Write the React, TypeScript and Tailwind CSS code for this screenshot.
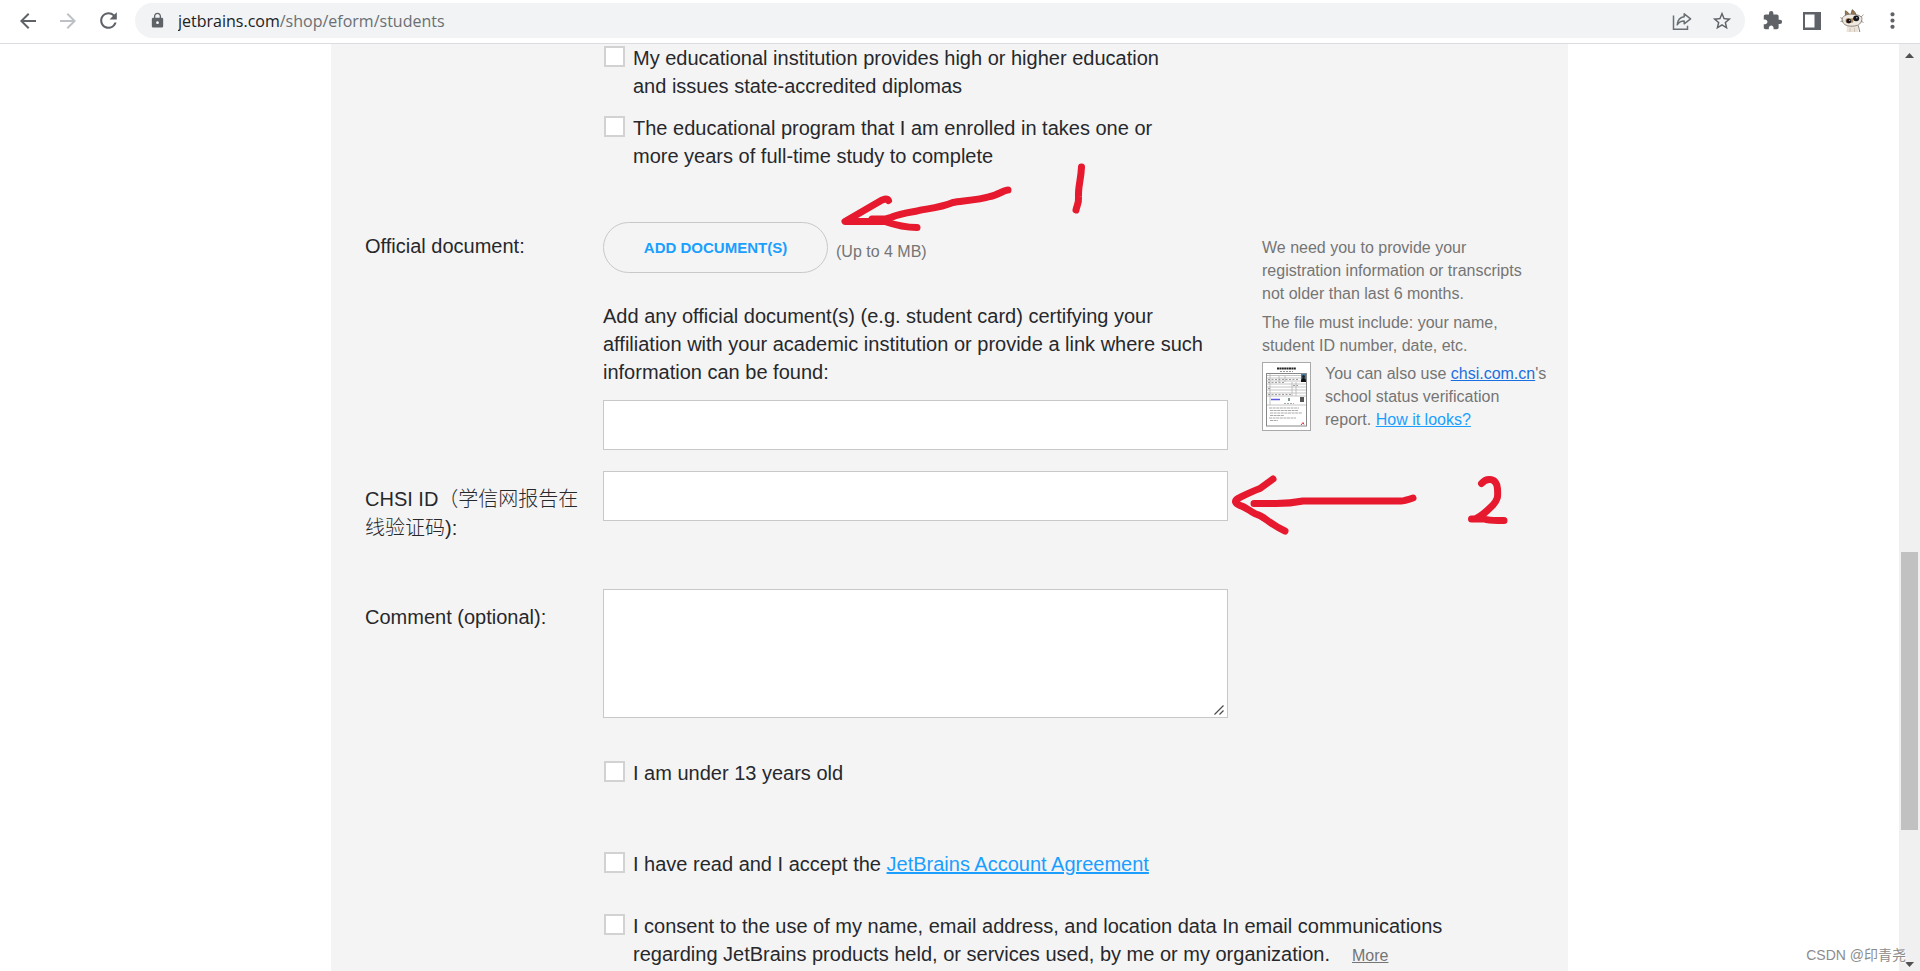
import type { ReactNode } from "react";
import {
  MdArrowBack,
  MdArrowForward,
  MdExtension,
  MdLock,
  MdMoreVert,
  MdRefresh,
  MdStarBorder,
} from "react-icons/md";

function BarButton({ label, children }: { label: string; children: ReactNode }) {
  return (
    <button
      type="button"
      aria-label={label}
      className="flex h-[35px] w-10 shrink-0 items-center justify-center text-[#5f6368]"
    >
      {children}
    </button>
  );
}

function ShareIcon() {
  return (
    <svg width="20" height="20" viewBox="0 0 20 20" fill="none" stroke="#6b6f74" strokeWidth="1.5">
      <path d="M1.500 4.500v13.700h14v-3.500" />
      <path
        d="M12.200 2.800 18.600 7.800 12.200 12.800V10C9.300 10 7 11 5.200 13.800 5.600 9.200 8 6.100 12.200 5.700Z"
        strokeLinejoin="round"
      />
    </svg>
  );
}

function SidePanelIcon() {
  return (
    <svg width="18" height="18" viewBox="0 0 18 18">
      <path fill="#5f6368" fillRule="evenodd" d="M0 0h18v18H0zM2 2.500h9.500v13H2z" />
    </svg>
  );
}

function CatAvatar() {
  return (
    <svg width="24" height="24" viewBox="0 0 24 24">
      <path d="M7 14.500h10.500l1 8.500H6.500z" fill="#ece4da" />
      <path d="M18.300 16.500 19.800 23" stroke="#8b847c" fill="none" />
      <path d="M5.500 7.500 5.300 1.800C7.200 2.500 8.600 3.900 9.300 5.500zM11 5.200 12.200.700C14 1.600 15.300 3.300 16 5.600z" fill="#9b7a52" stroke="#5a4a3a" strokeWidth=".7" />
      <path
        d="M2 9.500C4 6 7.500 5 11.500 5.200s8 .6 10.300 3.300c.6 3-1 6.500-4.300 7.800-4 1.400-9.500 1.300-12.500-.600C2.800 14 1.800 12 2 9.500z"
        fill="#efe9e1"
        stroke="#77706a"
        strokeWidth=".8"
      />
      <path d="M11 9.500 14 9l-1 4.500-2.300.200z" fill="#a98862" />
      <ellipse cx="8.600" cy="11.800" rx="3.100" ry="2.700" fill="#a98862" />
      <ellipse cx="8.800" cy="12" rx="2.500" ry="2.300" fill="#17151a" />
      <ellipse cx="16.200" cy="9.300" rx="3" ry="2.900" fill="#17151a" />
      <circle cx="9.700" cy="11.400" r=".7" fill="#9fb4cc" />
      <circle cx="16.800" cy="8.700" r=".8" fill="#9fb4cc" />
      <path d="M.300 8.500 3 10M.500 12.500 3.500 12M21 8l2.500-2.300M21 12l2.500 1.500" stroke="#77706a" strokeWidth=".7" />
      <path d="M10 19v4M14.500 19v4" stroke="#c9bdb0" strokeWidth=".8" />
    </svg>
  );
}

function BrowserBar() {
  return (
    <header className="flex h-11 shrink-0 items-start border-b border-[#dadce0] bg-white px-2 pt-[3px]">
      <BarButton label="Back">
        <MdArrowBack size={24} />
      </BarButton>
      <BarButton label="Forward">
        <MdArrowForward size={24} className="text-[#bdc1c6]" />
      </BarButton>
      <BarButton label="Reload">
        <MdRefresh size={25} />
      </BarButton>
      <div className="mx-[7px] flex h-[35px] min-w-0 flex-1 items-center rounded-full bg-[#f1f3f4] pr-[3px] pl-[14px]">
        <MdLock size={17} className="shrink-0 text-[#5f6368]" />
        <p className="ml-3 flex-1 truncate font-['Open_Sans','Noto_Sans',sans-serif] text-[16px] leading-6 text-[#6b6f73]">
          <span className="text-[#202124]">jetbrains.com</span>/shop/eform/students
        </p>
        <BarButton label="Share">
          <ShareIcon />
        </BarButton>
        <BarButton label="Bookmark">
          <MdStarBorder size={22} />
        </BarButton>
      </div>
      <BarButton label="Extensions">
        <MdExtension size={21} />
      </BarButton>
      <BarButton label="Side panel">
        <SidePanelIcon />
      </BarButton>
      <BarButton label="Profile">
        <CatAvatar />
      </BarButton>
      <BarButton label="Menu">
        <MdMoreVert size={25} />
      </BarButton>
    </header>
  );
}

function Check({ id, children }: { id: string; children: ReactNode }) {
  return (
    <div className="flex items-start">
      <input
        id={id}
        type="checkbox"
        className="mx-px mt-[2px] h-[21px] w-[21px] shrink-0 appearance-none border-2 border-[#d2d2d2] bg-white"
      />
      <label htmlFor={id} className="ml-[7px]">
        {children}
      </label>
    </div>
  );
}

function ReportThumb() {
  return (
    <svg width="49" height="69" viewBox="0 0 49 69" className="shrink-0">
      <rect x=".5" y=".5" width="48" height="68" fill="#fff" stroke="#a9a9a9" />
      <path d="M15 6.500h19" stroke="#222" strokeWidth="2" strokeDasharray="2 .4" />
      <path d="M18 9.500h13" stroke="#999" strokeDasharray="2 1" />
      <rect x="4.500" y="11.500" width="40" height="52.500" fill="#fff" stroke="#888" />
      <path d="M5 13.500h34M5 16h34M5 19h39M5 22h39M5 25h39M5 28h39M5 31h39M5 34h39M5 43h39M8 12v31M17 14v6M23 14v6M30 20v14M34 20v14" stroke="#b5b5b5" strokeWidth=".8" />
      <path d="M6 17.500h30M6 20.500h16M6 26.500h3M31 23.500h5M6 32.500h24" stroke="#888" strokeWidth=".8" strokeDasharray="2 1.500" />
      <rect x="39" y="12" width="5" height="8" fill="#3f7ea6" />
      <path d="M39 20c0-3 1-4 2.500-4s2.500 1 2.500 4z" fill="#111" />
      <circle cx="41.500" cy="14.500" r="1.500" fill="#222" />
      <path d="M9 37.500h9" stroke="#5a5ae0" strokeWidth="1.500" />
      <path d="M26 36h2v3h-2z" fill="#7c9c8c" />
      <path d="M22 41.500h10" stroke="#aaa" strokeDasharray="2 1" />
      <path d="M38 35h4v5h-4z" fill="#555" />
      <path d="M7 46h30M8 48.500h28M8 51h32M8 53.500h14M7 56h27M8 58.500h8" stroke="#aaa" strokeDasharray="3 .6" />
      <path d="M39 63l2-2.500 1 2" stroke="#d33" fill="none" />
    </svg>
  );
}

function Annotations() {
  return (
    <svg
      width="1237"
      height="927"
      viewBox="331 44 1237 927"
      className="pointer-events-none absolute top-0 left-0"
      fill="none"
      stroke="#e6192e"
      strokeWidth="7"
      strokeLinecap="round"
      strokeLinejoin="round"
    >
      <path d="M1008 190C1004 190 998 195 990 196.500C979 200 961 201 953 202.500C940 208 924 209 917 211C905 213 898 214 892 217L885 219H872" />
      <path d="M888.500 200.500C887 198 885 199 882 200L845 221.500H885C895 225 904 227.500 917 227.500" />
      <path d="M1081.500 167C1081 180 1078 186 1078.500 197C1079 203 1077 205 1076 210" />
      <path d="M1413 498Q1404 501 1401 501H1303C1293 503 1286 503.500 1276 503.500H1254" />
      <path d="M1273 479L1260 488.500C1250 492 1243 496 1238 498.500C1234 501 1235 503.500 1240 505.500C1246 507 1252 513 1257 514.500C1264 516 1269 524 1285 531" />
      <path d="M1481.500 483.500C1487 477 1497 478 1497.500 489C1498 497 1498 499 1493 505C1486 512 1482 516 1475 519L1471.500 519H1484C1490 521 1494 520.500 1504 520.500" />
    </svg>
  );
}

const box = "block w-full border border-[#c8c8c8] bg-white px-3 outline-none";
const row = "grid grid-cols-[238px_625px_1fr]";

function StudentForm() {
  return (
    <form className="relative mx-auto w-full max-w-[1237px] bg-[#f4f4f4] px-[34px] font-['Liberation_Sans','Noto_Sans_CJK_SC',sans-serif] text-[20px] leading-7 text-[#27282c]">
      <div className="ml-[238px] flex w-[560px] flex-col gap-[14px]">
        <Check id="accredited">
          My educational institution provides high or higher education
          <br />
          and issues state-accredited diplomas
        </Check>
        <Check id="full-time">
          The educational program that I am enrolled in takes one or
          <br />
          more years of full-time study to complete
        </Check>
      </div>

      <div className={`${row} mt-[52px]`}>
        <label htmlFor="add-docs" className="pt-[10px]">
          Official document:
        </label>
        <div>
          <div className="flex items-center">
            <button
              id="add-docs"
              type="button"
              className="h-[51px] w-[225px] rounded-full border border-[#c8c8c8] text-[15px] font-bold text-[#1a9fff]"
            >
              ADD DOCUMENT(S)
            </button>
            <span className="ml-2 pt-2 text-[16px] text-[#757575]">(Up to 4 MB)</span>
          </div>
          <label htmlFor="doc-link" className="mt-[29px] block">
            Add any official document(s) (e.g. student card) certifying your
            <br />
            affiliation with your academic institution or provide a link where such
            <br />
            information can be found:
          </label>
          <input id="doc-link" type="text" className={`${box} mt-[14px] h-[50px]`} />
        </div>
        <aside className="pt-[14px] pl-[34px] text-[16px] leading-[23px] text-[#757575]">
          <p>
            We need you to provide your
            <br />
            registration information or transcripts
            <br />
            not older than last 6 months.
          </p>
          <p className="mt-[6px]">
            The file must include: your name,
            <br />
            student ID number, date, etc.
          </p>
          <div className="mt-[5px] flex gap-[14px]">
            <ReportThumb />
            <p className="whitespace-nowrap">
              You can also use{" "}
              <a href="#chsi" className="text-[#1a6fe0] underline">
                chsi.com.cn
              </a>
              's
              <br />
              school status verification
              <br />
              report.{" "}
              <a href="#sample" className="text-[#1a9fff] underline">
                How it looks?
              </a>
            </p>
          </div>
        </aside>
      </div>

      <div className={`${row} mt-[21px]`}>
        <label htmlFor="chsi-id" className="pt-[13px]">
          CHSI ID<span className="font-['Noto_Sans_CJK_TC'] font-light">（</span>
          <span className="font-['Noto_Sans_CJK_SC'] font-light">
            学信网报告在
            <br />
            线验证码
          </span>
          ):
        </label>
        <input id="chsi-id" type="text" className={`${box} h-[50px]`} />
      </div>

      <div className={`${row} mt-[47px]`}>
        <label htmlFor="comment" className="pt-[14px]">
          Comment (optional):
        </label>
        <div className="relative">
          <textarea id="comment" className={`${box} h-[129px] resize-none`} />
          <svg width="10" height="10" viewBox="0 0 10 10" className="absolute right-1 bottom-[3px]">
            <path d="M.500 9.500 9.500.500M5.500 9.500l4-4" stroke="#4a4a4a" strokeWidth="1.200" />
          </svg>
        </div>
      </div>

      <div className="ml-[238px]">
        <div className="mt-[41px]">
          <Check id="under-13">I am under 13 years old</Check>
        </div>
        <div className="mt-[63px]">
          <Check id="agreement">
            I have read and I accept the{" "}
            <a href="#agreement-text" className="text-[#1a9fff] underline decoration-2">
              JetBrains Account Agreement
            </a>
          </Check>
        </div>
        <div className="mt-[34px]">
          <Check id="consent">
            I consent to the use of my name, email address, and location data In email communications
            <br />
            regarding JetBrains products held, or services used, by me or my organization.
            <a href="#more" className="ml-[22px] text-[16px] text-[#757575] underline">
              More
            </a>
          </Check>
        </div>
      </div>
      <Annotations />
    </form>
  );
}

function ScrollTrack() {
  return (
    <div className="flex w-[21px] shrink-0 flex-col items-center bg-[#f0f0f0]">
      <svg width="9" height="5" viewBox="0 0 9 5" className="mt-[9px] shrink-0">
        <path d="M4.500 0 9 5H0z" fill="#505050" />
      </svg>
      <div className="flex w-full flex-1 flex-col px-[2px] py-[7px]">
        <div className="flex-[486]" />
        <div className="flex-[278] bg-[#c1c1c1]" />
        <div className="flex-[125]" />
      </div>
      <svg width="9" height="5" viewBox="0 0 9 5" className="mb-[4px] shrink-0">
        <path d="M0 0h9L4.500 5z" fill="#505050" />
      </svg>
    </div>
  );
}

export default function App() {
  return (
    <div className="relative flex h-screen flex-col overflow-hidden bg-white">
      <BrowserBar />
      <div className="flex min-h-0 flex-1">
        <main className="flex min-w-0 flex-1 overflow-hidden">
          <StudentForm />
        </main>
        <ScrollTrack />
      </div>
      <p className="absolute right-[14px] bottom-[4px] font-['Liberation_Sans','Noto_Sans_CJK_SC',sans-serif] text-[14px] leading-6 text-[#8c8c8c] [text-shadow:1px_1px_1px_#fff]">
        CSDN @印青尧
      </p>
    </div>
  );
}
